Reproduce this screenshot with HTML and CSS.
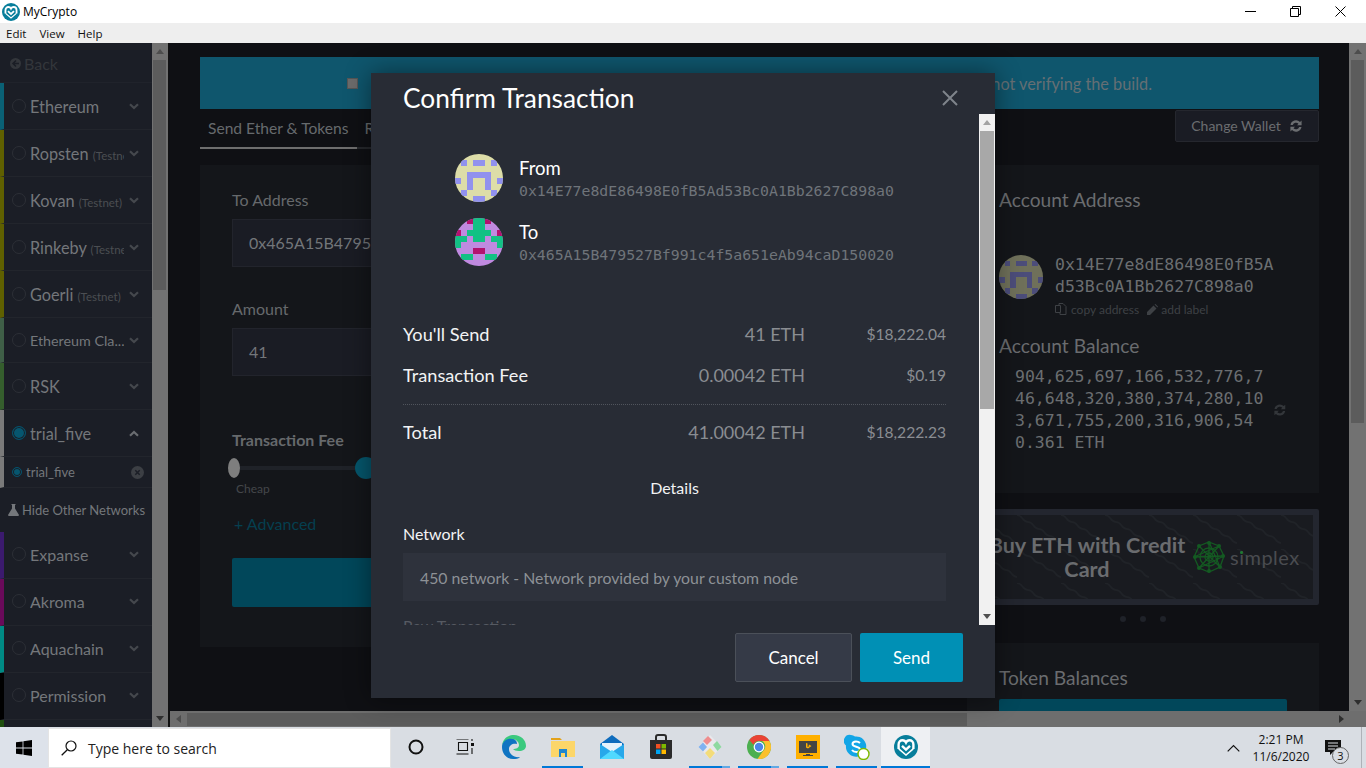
FILE: index.html
```html
<!DOCTYPE html>
<html lang="en">
<head>
    <meta charset="UTF-8">
    <meta name="viewport" content="width=device-width, initial-scale=1.0">
    <title>MyCrypto</title>
    <link rel="stylesheet" href="styles.css">
</head>
<body>
    <svg class="defs" width="0" height="0">
        <symbol id="blockie-from" viewBox="0 0 8 8" shape-rendering="crispEdges">
            <rect width="8" height="8" fill="#dddda8"/>
            <g fill="#9191ee">
                <rect x="1" y="1" width="1" height="1"/><rect x="3" y="1" width="2" height="1"/><rect x="6" y="1" width="1" height="1"/>
                <rect x="2" y="3" width="4" height="1"/>
                <rect x="0" y="4" width="1" height="1"/><rect x="2" y="4" width="1" height="2"/><rect x="5" y="4" width="1" height="2"/><rect x="7" y="4" width="1" height="1"/>
                <rect x="1" y="6" width="1" height="1"/><rect x="6" y="6" width="1" height="1"/>
                <rect x="3" y="7" width="2" height="1"/>
            </g>
        </symbol>
        <symbol id="blockie-to" viewBox="0 0 8 8" shape-rendering="crispEdges">
            <rect width="8" height="8" fill="#c08ae0"/>
            <g fill="#12c184">
                <rect x="3" y="0" width="2" height="2"/><rect x="2" y="2" width="4" height="1"/>
                <rect x="0" y="3" width="2" height="1"/><rect x="3" y="3" width="2" height="1"/><rect x="6" y="3" width="2" height="1"/>
                <rect x="0" y="4" width="1" height="1"/><rect x="7" y="4" width="1" height="1"/>
                <rect x="1" y="6" width="2" height="1"/><rect x="5" y="6" width="2" height="1"/>
            </g>
            <g fill="#b3126f">
                <rect x="0" y="2" width="1" height="1"/><rect x="7" y="2" width="1" height="1"/>
                <rect x="2" y="0" width="1" height="1"/><rect x="5" y="0" width="1" height="1"/>
                <rect x="3" y="5" width="2" height="1"/>
            </g>
        </symbol>
        <symbol id="chevron" viewBox="0 0 10 7">
            <path d="M1 1.2 5 5 9 1.2" fill="none" stroke="currentColor" stroke-width="2.2"/>
        </symbol>
        <symbol id="refresh" viewBox="0 0 14 14">
            <path d="M1.5 6A5.6 5.6 0 0 1 11 3l1.6-1.4V6.2H8L9.500 4.700A3.400 3.400 0 0 0 3.800 6ZM12.500 8A5.600 5.600 0 0 1 3 11l-1.600 1.400V7.800H6L4.500 9.300A3.400 3.400 0 0 0 10.200 8Z" fill="currentColor"/>
        </symbol>
        <symbol id="logo" viewBox="0 0 24 24">
            <circle cx="12" cy="12" r="12" fill="#077e9b"/>
            <path d="M4.600 14V9.500C4.600 6.800 6.500 5.300 8.500 5.300 10 5.300 11.300 6 12 7.500 12.700 6 14 5.300 15.500 5.300 17.500 5.300 19.400 6.800 19.400 9.500V14" fill="none" stroke="#fff" stroke-width="2.400"/>
            <path d="M4.800 13.800 12 20 19.200 13.800" fill="none" stroke="#fff" stroke-width="1.600"/>
            <path d="M8 10.800 12 14.600 16 10.800" fill="none" stroke="#fff" stroke-width="2.400"/>
        </symbol>
    </svg>

    <div class="titlebar">
        <svg class="title-logo" width="18" height="18"><use href="#logo"/></svg>
        <span class="title-text">MyCrypto</span>
        <div class="win-btns">
            <svg width="11" height="11" viewBox="0 0 11 11"><path d="M0 5.500H11" stroke="#000"/></svg>
            <svg width="11" height="11" viewBox="0 0 11 11"><path d="M.5 2.500h8v8h-8zM2.500 2.500v-2h8v8h-2" fill="none" stroke="#000"/></svg>
            <svg width="11" height="11" viewBox="0 0 11 11"><path d="M.5.500l10 10M10.500.500l-10 10" stroke="#000"/></svg>
        </div>
    </div>
    <div class="menubar">
        <span>Edit</span>
        <span>View</span>
        <span>Help</span>
    </div>

    <div class="app">
        <aside class="sidebar">
            <div class="back">
                <svg width="11" height="11" viewBox="0 0 11 11"><circle cx="5.500" cy="5.500" r="5.500" fill="#33363b"/><path d="M6 2.500 3 5.500 6 8.500M3.500 5.500H9" fill="none" stroke="#1b1e26" stroke-width="1.600"/></svg>
                <span>Back</span>
            </div>
            <div class="net net-eth"><i class="radio"></i><span class="net-name">Ethereum</span><svg class="chev" width="10" height="7"><use href="#chevron"/></svg></div>
            <div class="net net-test"><i class="radio"></i><span class="net-name">Ropsten <small>(Testnet)</small></span><svg class="chev" width="10" height="7"><use href="#chevron"/></svg></div>
            <div class="net net-test"><i class="radio"></i><span class="net-name">Kovan <small>(Testnet)</small></span><svg class="chev" width="10" height="7"><use href="#chevron"/></svg></div>
            <div class="net net-test"><i class="radio"></i><span class="net-name">Rinkeby <small>(Testnet)</small></span><svg class="chev" width="10" height="7"><use href="#chevron"/></svg></div>
            <div class="net net-test"><i class="radio"></i><span class="net-name">Goerli <small>(Testnet)</small></span><svg class="chev" width="10" height="7"><use href="#chevron"/></svg></div>
            <div class="net net-etc"><i class="radio"></i><span class="net-name">Ethereum Cla...</span><svg class="chev" width="10" height="7"><use href="#chevron"/></svg></div>
            <div class="net net-rsk"><i class="radio"></i><span class="net-name">RSK</span><svg class="chev" width="10" height="7"><use href="#chevron"/></svg></div>
            <div class="net net-custom"><i class="radio radio-on"></i><span class="net-name">trial_five</span><svg class="chev chev-up" width="10" height="7"><use href="#chevron"/></svg></div>
            <div class="subnet">
                <i class="radio radio-on radio-small"></i>
                <span class="subnet-name">trial_five</span>
                <svg class="subnet-x" width="13" height="13" viewBox="0 0 13 13"><circle cx="6.500" cy="6.500" r="6.500" fill="#3c3f44"/><path d="M4.300 4.300l4.400 4.400M8.700 4.300 4.300 8.700" stroke="#1b1e26" stroke-width="1.500"/></svg>
            </div>
            <div class="hide-other">
                <svg width="11" height="12" viewBox="0 0 11 12"><path d="M3.500 0h4v1H7v3.500l4 6.500-.6 1H.6L0 11l4-6.500V1h-.5z" fill="#74777b"/></svg>
                <span>Hide Other Networks</span>
            </div>
            <div class="net net-low net-exp"><i class="radio"></i><span class="net-name">Expanse</span><svg class="chev" width="10" height="7"><use href="#chevron"/></svg></div>
            <div class="net net-low net-akr"><i class="radio"></i><span class="net-name">Akroma</span><svg class="chev" width="10" height="7"><use href="#chevron"/></svg></div>
            <div class="net net-low net-aqua"><i class="radio"></i><span class="net-name">Aquachain</span><svg class="chev" width="10" height="7"><use href="#chevron"/></svg></div>
            <div class="net net-low net-perm"><i class="radio"></i><span class="net-name">Permission</span><svg class="chev" width="10" height="7"><use href="#chevron"/></svg></div>
            <div class="net net-last"></div>
        </aside>
        <div class="vscroll vscroll-side">
            <i class="arrow-up"></i>
            <div class="thumb thumb-side"></div>
            <i class="arrow-down"></i>
        </div>

        <div class="content">
            <div class="content-row">
                <main class="main">
                    <div class="banner">
                        <i class="banner-square"></i>
                        <span>not verifying the build.</span>
                    </div>
                    <div class="tab-row">
                        <nav class="tabs">
                            <a class="tab tab-on">Send Ether &amp; Tokens</a>
                            <a class="tab">R</a>
                        </nav>
                        <button class="change-wallet">Change Wallet <svg width="14" height="14"><use href="#refresh"/></svg></button>
                    </div>
                    <div class="columns">
                        <section class="card send-card">
                            <label class="field-label">To Address</label>
                            <div class="field-input">0x465A15B4795</div>
                            <label class="field-label field-gap">Amount</label>
                            <div class="field-input">41</div>
                            <div class="fee-label">Transaction Fee</div>
                            <div class="slider"><i class="slider-min"></i><i class="slider-track"></i><i class="slider-knob"></i></div>
                            <div class="cheap">Cheap</div>
                            <div class="advanced">+ Advanced</div>
                            <div class="send-btn"></div>
                        </section>
                        <div class="side-col">
                            <section class="card account-card">
                                <h3 class="card-title">Account Address</h3>
                                <div class="account-row">
                                    <svg class="blockie-small" width="44" height="44"><use href="#blockie-from"/></svg>
                                    <div class="account-text">
                                        <div class="mono-big">0x14E77e8dE86498E0fB5A<br>d53Bc0A1Bb2627C898a0</div>
                                        <div class="account-links">
                                            <svg width="13" height="13" viewBox="0 0 13 13"><path d="M.5 2.500h5v7h-5zM4 2.500V.500h4l3 3v8H5v-2" fill="none" stroke="currentColor"/></svg>
                                            <span>copy address</span>
                                            <svg width="11" height="11" viewBox="0 0 11 11"><path d="M0 11V8l6.500-6.500 3 3L3 11zM7.500.500 8.500 0l2.500 2.500-.5 1z" fill="currentColor"/></svg>
                                            <span>add label</span>
                                        </div>
                                    </div>
                                </div>
                                <h3 class="card-title balance-title">Account Balance</h3>
                                <div class="balance-row">
                                    <div class="mono-big">904,625,697,166,532,776,7<br>46,648,320,380,374,280,10<br>3,671,755,200,316,906,54<br>0.361 ETH</div>
                                    <svg class="balance-refresh" width="14" height="14"><use href="#refresh"/></svg>
                                </div>
                            </section>
                            <section class="promo">
                                <svg class="promo-waves" width="340" height="84">
                                    <defs>
                                        <pattern id="waves" width="44" height="34" patternUnits="userSpaceOnUse">
                                            <path d="M0 0c6 0 5 7 11 7s5 7 11 7 5 7 11 7 5 7 11 7" fill="none" stroke="#202328" stroke-width="1.300"/>
                                        </pattern>
                                    </defs>
                                    <rect width="340" height="84" fill="url(#waves)"/>
                                </svg>
                                <div class="promo-text">Buy ETH with Credit Card</div>
                                <svg class="simplex-icon" width="32" height="32" viewBox="0 0 32 32">
                                    <g fill="none" stroke="#145a22" stroke-width="1.300">
                                        <path d="M16 1 26 5 31 15 27 26 16 31 6 27 1 16 6 5Z"/>
                                        <path d="M16 1 27 26M26 5 6 27M31 15 1 16M27 26 6 5M16 31 16 1M6 27 31 15M1 16 26 5M6 5 27 26"/>
                                        <circle cx="16" cy="16" r="4"/><circle cx="16" cy="16" r="9"/>
                                    </g>
                                    <g fill="#145a22">
                                        <circle cx="16" cy="2" r="2"/><circle cx="26" cy="5" r="2"/><circle cx="30" cy="15" r="2"/><circle cx="27" cy="26" r="2"/>
                                        <circle cx="16" cy="30" r="2"/><circle cx="6" cy="27" r="2"/><circle cx="2" cy="16" r="2"/><circle cx="6" cy="5" r="2"/>
                                    </g>
                                </svg>
                                <span class="simplex-text">simplex</span>
                            </section>
                            <div class="dots"><i></i><i></i><i></i></div>
                            <section class="card token-card">
                                <h3 class="card-title">Token Balances</h3>
                                <div class="token-btn"></div>
                            </section>
                        </div>
                    </div>
                </main>
                <div class="vscroll vscroll-main">
                    <i class="arrow-up"></i>
                    <div class="thumb thumb-main"></div>
                    <i class="arrow-down"></i>
                </div>
            </div>
            <div class="hscroll">
                <i class="arrow-left"></i>
                <div class="hthumb"></div>
                <i class="arrow-right"></i>
            </div>
        </div>
    </div>

    <div class="taskbar">
        <div class="start">
            <svg width="16" height="16" viewBox="0 0 16 16"><path d="M0 2.300 6.600 1.400V7.600H0ZM7.400 1.300 16 0V7.600H7.400ZM0 8.400H6.600V14.600L0 13.700ZM7.400 8.400H16V16L7.400 14.700Z" fill="#000"/></svg>
        </div>
        <div class="search">
            <svg width="16" height="16" viewBox="0 0 16 16"><circle cx="10" cy="6" r="5" fill="none" stroke="#111" stroke-width="1.200"/><path d="M6.300 9.700.700 15.300" stroke="#111" stroke-width="1.300"/></svg>
            <span>Type here to search</span>
        </div>
        <div class="task-icon"><svg width="16" height="16" viewBox="0 0 16 16"><circle cx="8" cy="8" r="6.500" fill="none" stroke="#111" stroke-width="2"/></svg></div>
        <div class="task-icon"><svg width="18" height="16" viewBox="0 0 18 16"><path d="M.500 0h12M2.500 3.500h9v8h-9zM.500 15h12" fill="none" stroke="#111" stroke-width="1.100"/><path d="M15 4h3v3h-3z" fill="#111"/><path d="M16 9v6M16 0v2" stroke="#111" stroke-width="1.100"/></svg></div>
        <div class="task-icon"><svg width="26" height="26" viewBox="0 0 26 26">
            <path d="M1 13C1 5 7 1 13 1c7 0 12 5 12 11 0 3-3 5-7 5-3 0-5-1-6-2 3 0 6-1 6-4 0-3-3-6-7-6-6 0-10 4-10 8Z" fill="#3bc97e"/>
            <path d="M1 13c0-5 5-9 10-8 3 0 5 2 5 5-4-1-8 1-8 5 0 5 5 9 11 8-2 2-4 2-7 2C6 25 1 20 1 13Z" fill="#0f74c2"/>
        </svg></div>
        <div class="task-icon task-open"><svg width="24" height="20" viewBox="0 0 24 20"><path d="M0 1h9l2 2h-11z" fill="#e3a21a"/><path d="M0 4h24v16H0z" fill="#fcd669"/><path d="M8 12h8v8h-2v-4h-4v4H8z" fill="#1f87d0"/></svg></div>
        <div class="task-icon"><svg width="24" height="24" viewBox="0 0 24 24"><path d="M0 9 12 0l12 9v15H0z" fill="#0f6cbd"/><path d="M2 8h20v8H2z" fill="#e6f2fb"/><path d="M0 9l12 8 12-8v15H0z" fill="#28a8ea"/><path d="M0 24 12 15l12 9z" fill="#50d9ff"/></svg></div>
        <div class="task-icon"><svg width="24" height="25" viewBox="0 0 24 25"><path d="M7 6V3q0-2 2-2h6q2 0 2 2v3" fill="none" stroke="#2b2b2b" stroke-width="2"/><path d="M1 6h22v17q0 2-2 2H3q-2 0-2-2z" fill="#2b2b2b"/><path d="M7 10h4.500v4.500H7z" fill="#f25022"/><path d="M12.500 10H17v4.500h-4.500z" fill="#7fba00"/><path d="M7 15.500h4.500V20H7z" fill="#00a4ef"/><path d="M12.500 15.500H17V20h-4.500z" fill="#ffb900"/></svg></div>
        <div class="task-icon task-open task-multi"><svg width="24" height="26" viewBox="0 0 24 26"><path d="M12 1 23.500 13 12 25 .500 13z" fill="#e8e8ec"/><path d="M5 7l5-5 4 4-5 5z" fill="#ef8d8d"/><path d="M.500 13 5 8.500l4 4.500-4 4.500z" fill="#7fb2f0"/><path d="M7 19l5-5 5 5-5 6z" fill="#f3dc7a"/><path d="M15 11l4-4 4.500 6-4 4z" fill="#8ed9a0"/></svg></div>
        <div class="task-icon task-open task-multi"><svg width="24" height="24" viewBox="0 0 24 24"><circle cx="12" cy="12" r="12" fill="#4caf50"/><path d="M12 0a12 12 0 0 1 10.400 6H12a6 6 0 0 0-5.600 3.800L2.300 5A12 12 0 0 1 12 0Z" fill="#ea4335"/><path d="M22.400 6A12 12 0 0 1 10.500 23.900L16 16a6 6 0 0 0-1-10Z" fill="#fbc02d"/><circle cx="12" cy="12" r="5.400" fill="#fff"/><circle cx="12" cy="12" r="4.200" fill="#4a86e8"/></svg></div>
        <div class="task-icon task-open"><svg width="24" height="24" viewBox="0 0 24 24"><path d="M0 0h24v24H0z" fill="#ffb000"/><path d="M3 6h18v12H3z" fill="#444"/><path d="M10 19h4v1h3v1H7v-1h3z" fill="#444"/><path d="M10 8l1.500.500v3.500l2-1-1-.500.500-1 2.500 1.500-3.500 2.500-2-1z" fill="#ffb000"/></svg></div>
        <div class="task-icon task-open"><svg width="26" height="26" viewBox="0 0 26 26"><path d="M7 1a6 6 0 0 1 4 1.500 10 10 0 0 1 11 12 6 6 0 0 1-8 8 10 10 0 0 1-12-11A6 6 0 0 1 7 1Z" fill="#12a5e6"/><path d="M16 9c-1-1-2-1.500-4-1.500-2 0-3.500 1-3.500 2.500 0 3.500 7.500 2 7.500 5.500 0 1.500-1.500 2.500-3.500 2.500S9 17.500 8 16" fill="none" stroke="#fff" stroke-width="2"/><circle cx="19.500" cy="20" r="5.500" fill="#fff" stroke="#7fba00" stroke-width="1.400"/></svg></div>
        <div class="task-icon task-open task-active"><svg width="24" height="24"><use href="#logo"/></svg></div>

        <div class="tray">
            <svg class="tray-chev" width="13" height="8" viewBox="0 0 13 8"><path d="M.7 7.300 6.500 1.500 12.300 7.300" fill="none" stroke="#111" stroke-width="1.200"/></svg>
            <div class="clock"><div>2:21 PM</div><div>11/6/2020</div></div>
            <div class="notif">
                <svg width="16" height="16" viewBox="0 0 16 16"><path d="M0 0h16v12H8l-3 3v-3H0z" fill="#111"/><path d="M3 3h10M3 6h10M3 9h7" stroke="#dadde2"/></svg>
                <span class="notif-count">3</span>
            </div>
            <i class="show-desktop"></i>
        </div>
    </div>

    <div class="modal">
        <div class="modal-head">
            <h2>Confirm Transaction</h2>
            <svg width="16" height="16" viewBox="0 0 16 16"><path d="M1 1l14 14M15 1 1 15" stroke="#7f848b" stroke-width="2"/></svg>
        </div>
        <div class="modal-mid">
            <div class="modal-body">
                <div class="party">
                    <svg class="blockie" width="48" height="48"><use href="#blockie-from"/></svg>
                    <div>
                        <div class="party-label">From</div>
                        <div class="party-addr">0x14E77e8dE86498E0fB5Ad53Bc0A1Bb2627C898a0</div>
                    </div>
                </div>
                <div class="party">
                    <svg class="blockie" width="48" height="48"><use href="#blockie-to"/></svg>
                    <div>
                        <div class="party-label">To</div>
                        <div class="party-addr">0x465A15B479527Bf991c4f5a651eAb94caD150020</div>
                    </div>
                </div>
                <div class="amounts">
                    <div class="amount-row"><span class="amount-name">You'll Send</span><span class="amount-eth">41 ETH</span><span class="amount-usd">$18,222.04</span></div>
                    <div class="amount-row"><span class="amount-name">Transaction Fee</span><span class="amount-eth">0.00042 ETH</span><span class="amount-usd">$0.19</span></div>
                    <div class="amount-row amount-total"><span class="amount-name">Total</span><span class="amount-eth">41.00042 ETH</span><span class="amount-usd">$18,222.23</span></div>
                </div>
                <div class="details">Details</div>
                <div class="detail-label">Network</div>
                <div class="detail-box">450 network - Network provided by your custom node</div>
                <div class="detail-label detail-next">Raw Transaction</div>
            </div>
            <div class="modal-scroll">
                <i class="arrow-up"></i>
                <div class="modal-thumb"></div>
                <i class="arrow-down"></i>
            </div>
        </div>
        <div class="modal-foot">
            <button class="btn-cancel">Cancel</button>
            <button class="btn-send">Send</button>
        </div>
    </div>
</body>
</html>
```

FILE: styles.css
```css
* {
    box-sizing: border-box;
}
body {
    margin: 0;
    width: 1366px;
    height: 768px;
    overflow: hidden;
    position: relative;
    display: flex;
    flex-direction: column;
    font-family: Lato, "Open Sans", sans-serif;
    background: #0f1014;
}
h2, h3 {
    margin: 0;
    font-weight: 400;
}
i {
    display: block;
}
button {
    font-family: inherit;
}
.defs {
    position: absolute;
}

/* window chrome */
.titlebar {
    height: 23px;
    background: #fff;
    display: flex;
    align-items: center;
    padding-left: 2px;
    font-family: "Open Sans", sans-serif;
    font-size: 12px;
    color: #000;
}
.title-text {
    margin-left: 3px;
}
.win-btns {
    margin-left: auto;
    display: flex;
    gap: 34px;
    padding-right: 20px;
}
.menubar {
    height: 20px;
    background: #eee;
    display: flex;
    gap: 13px;
    padding-left: 6px;
    align-items: center;
    font-family: "Open Sans", sans-serif;
    font-size: 11.5px;
    color: #111;
}
.app {
    height: 684px;
    display: flex;
}

/* sidebar */
.sidebar {
    width: 152px;
    background: #1b1e26;
    overflow: hidden;
    flex-shrink: 0;
}
.back {
    height: 40px;
    display: flex;
    align-items: center;
    gap: 3px;
    padding: 1px 0 0 10px;
    color: #33363b;
    font-size: 16px;
    border-bottom: 1px solid #20232b;
}
.net {
    height: 47px;
    display: flex;
    align-items: center;
    padding-left: 8px;
    border-left: 4px solid #5f6000;
    border-bottom: 1px solid #22252c;
    color: #74777b;
    font-size: 16.3px;
}
.net-name {
    margin-left: 4px;
    width: 94px;
    white-space: nowrap;
    overflow: hidden;
}
.net-name small {
    font-size: 11.5px;
    color: #4b4e52;
}
.net-eth { border-left-color: #0a6175; }
.net-etc { border-left-color: #3f5f47; height: 45px; }
.net-etc .net-name { font-size: 14.3px; }
.net-rsk { border-left-color: #355e2d; }
.net-custom { border-left-color: #7a7a7a; }
.net-low { padding-bottom: 2px; font-size: 16px; }
.net-exp { border-left-color: #3b1a6e; }
.net-akr { border-left-color: #6a0a5a; }
.net-aqua { border-left-color: #008a84; }
.net-perm { border-left-color: #000; }
.net-last { border-left-color: #1f4f0f; }
.radio {
    width: 14px;
    height: 14px;
    border-radius: 50%;
    border: 1px solid #2c2f36;
    flex-shrink: 0;
}
.radio-on {
    border-color: #06506a;
    background: #06566f;
    box-shadow: inset 0 0 0 1px #1b1e26;
}
.radio-small {
    width: 10px;
    height: 10px;
}
.chev {
    margin-left: 5px;
    color: #45484d;
    flex-shrink: 0;
}
.chev-up {
    transform: rotate(180deg);
    color: #6a6d71;
}
.subnet {
    height: 31px;
    display: flex;
    align-items: center;
    padding-left: 8px;
    border-left: 4px solid #7a7a7a;
    border-bottom: 1px solid #22252c;
    color: #74777b;
    font-size: 13px;
}
.subnet-name {
    margin-left: 4px;
}
.subnet-x {
    margin-left: auto;
    margin-right: 8px;
}
.hide-other {
    height: 44px;
    display: flex;
    align-items: center;
    gap: 3px;
    padding-left: 8px;
    color: #74777b;
    font-size: 13px;
    white-space: nowrap;
}

/* scrollbars */
.vscroll {
    width: 17px;
    background: #727272;
    flex-shrink: 0;
    display: flex;
    flex-direction: column;
    align-items: center;
}
.vscroll-side {
    border-right: 1px solid #111;
}
.thumb {
    width: 13px;
    background: #5c5c5c;
}
.thumb-side {
    height: 230px;
    margin-top: 6px;
    margin-right: 1px;
}
.thumb-main {
    height: 363px;
    margin-top: 6px;
}
.arrow-up, .arrow-down {
    width: 0;
    height: 0;
    border-left: 4px solid transparent;
    border-right: 4px solid transparent;
}
.arrow-up {
    border-bottom: 5px solid #4d4d4d;
    margin-top: 6px;
}
.arrow-down {
    border-top: 5px solid #2e2e2e;
    margin-top: auto;
    margin-bottom: 6px;
}
.arrow-left, .arrow-right {
    width: 0;
    height: 0;
    border-top: 4px solid transparent;
    border-bottom: 4px solid transparent;
}
.arrow-left {
    border-right: 5px solid #4d4d4d;
    margin-left: 6px;
}
.arrow-right {
    border-left: 5px solid #2e2e2e;
    margin-left: auto;
    margin-right: 22px;
}
.hscroll {
    height: 16px;
    background: #6e6e6e;
    border-left: 1px solid #111;
    display: flex;
    align-items: center;
    flex-shrink: 0;
}
.hthumb {
    width: 780px;
    height: 13px;
    background: #5c5c5c;
    margin-left: 6px;
}

/* main page */
.content {
    flex: 1;
    min-width: 0;
    display: flex;
    flex-direction: column;
}
.content-row {
    height: 668px;
    display: flex;
}
.main {
    flex: 1;
    min-width: 0;
    overflow: hidden;
    padding: 14px 30px 0 31px;
    background: #0f1014;
}
.banner {
    height: 52px;
    background: #0f566d;
    display: flex;
    align-items: center;
    justify-content: space-between;
    padding: 0 167px 0 147px;
    color: #656f74;
    font-size: 16.3px;
}
.banner-square {
    width: 11px;
    height: 11px;
    background: #6b6b6b;
    border: 1px solid #555;
}
.tab-row {
    height: 40px;
    display: flex;
    justify-content: space-between;
    align-items: flex-start;
}
.tabs {
    display: flex;
}
.tab {
    height: 40px;
    line-height: 38px;
    padding: 0 8px;
    font-size: 15.6px;
    color: #666a6d;
    border-bottom: 2px solid #26282c;
    white-space: nowrap;
}
.tab-on {
    border-bottom-color: #6e6e6e;
}
.change-wallet {
    height: 32px;
    width: 144px;
    margin-top: 1px;
    padding-bottom: 2px;
    background: #1a1c24;
    border: 1px solid #25272e;
    border-radius: 2px;
    color: #6b6d70;
    font-size: 14px;
    display: flex;
    align-items: center;
    justify-content: center;
    gap: 8px;
}
.columns {
    display: flex;
    gap: 16px;
    margin-top: 16px;
    align-items: flex-start;
}
.card {
    background: #14161a;
    padding: 24px 32px;
}
.send-card {
    width: 751px;
    height: 482px;
    flex-shrink: 0;
    padding-top: 25px;
}
.field-label {
    display: block;
    height: 20px;
    line-height: 20px;
    margin-bottom: 9px;
    font-size: 16px;
    color: #66696c;
}
.field-gap {
    margin-top: 32px;
}
.field-input {
    height: 48px;
    line-height: 46px;
    padding-left: 16px;
    background: #1a1c24;
    border: 1px solid #22242c;
    font-size: 16px;
    color: #73767a;
    white-space: nowrap;
    overflow: hidden;
}
.fee-label {
    margin-top: 54px;
    font-size: 16px;
    font-weight: 700;
    color: #66696c;
}
.slider {
    display: flex;
    align-items: center;
    height: 22px;
    margin: 8px 0 0 -4px;
}
.slider-min {
    width: 12px;
    height: 20px;
    border-radius: 50%;
    background: #7e7e7e;
}
.slider-track {
    width: 115px;
    height: 4px;
    background: #1f2228;
}
.slider-knob {
    width: 22px;
    height: 22px;
    border-radius: 50%;
    background: #05566c;
}
.cheap {
    margin: 2px 0 0 4px;
    font-size: 12px;
    color: #44474a;
}
.advanced {
    margin-top: 18px;
    margin-left: 2px;
    font-size: 16px;
    color: #053f4f;
}
.send-btn {
    height: 49px;
    margin-top: 25px;
    background: #01475a;
    border-radius: 2px;
}
.side-col {
    width: 352px;
    flex-shrink: 0;
}
.account-card {
    height: 328px;
}
.card-title {
    font-size: 19.2px;
    line-height: 22px;
    color: #6a6c6f;
}
.account-row {
    display: flex;
    gap: 12px;
    margin-top: 44px;
}
.blockie-small {
    border-radius: 50%;
    opacity: .45;
    flex-shrink: 0;
}
.account-text {
    margin-top: -1px;
}
.mono-big {
    font-family: "DejaVu Sans Mono", monospace;
    font-size: 16.5px;
    line-height: 22px;
    color: #6b6e71;
    white-space: nowrap;
}
.account-links {
    display: flex;
    align-items: center;
    gap: 3px;
    margin-top: 4px;
    font-size: 12px;
    color: #3e4145;
}
.account-links span + svg {
    margin-left: 5px;
}
.balance-title {
    margin-top: 18px;
}
.balance-row {
    display: flex;
    align-items: center;
    gap: 10px;
    margin: 9px 0 0 16px;
}
.balance-refresh {
    color: #33363a;
}
.promo {
    height: 96px;
    margin-top: 16px;
    background: #191b20;
    border: 6px solid #23262f;
    border-radius: 2px;
    position: relative;
    display: flex;
    align-items: center;
}
.promo-waves {
    position: absolute;
    left: 0;
    top: 0;
}
.promo-text {
    width: 228px;
    position: relative;
    text-align: center;
    font-size: 21.6px;
    font-weight: 700;
    line-height: 24px;
    color: #6a6c6f;
}
.simplex-icon {
    position: relative;
    margin-left: -8px;
}
.simplex-text {
    position: relative;
    margin-left: 5px;
    font-size: 20px;
    letter-spacing: .5px;
    color: #4a4c50;
}
.simplex-text::before {
    content: "";
    position: absolute;
    left: 10px;
    top: 6px;
    width: 3px;
    height: 3px;
    border-radius: 50%;
    background: #1c7a30;
}
.dots {
    height: 28px;
    margin-bottom: 10px;
    display: flex;
    justify-content: center;
    align-items: center;
    gap: 14px;
}
.dots i {
    width: 6px;
    height: 6px;
    border-radius: 50%;
    background: #1f2229;
}
.token-card {
    height: 160px;
}
.token-btn {
    width: 288px;
    height: 40px;
    margin-top: 10px;
    background: #01475a;
    border-radius: 2px;
}

/* taskbar */
.taskbar {
    height: 41px;
    background: #d9dde3;
    display: flex;
    align-items: stretch;
    font-family: "Open Sans", sans-serif;
    color: #111;
}
.start {
    width: 48px;
    display: flex;
    align-items: center;
    justify-content: center;
    background: #dde2ea;
}
.search {
    width: 343px;
    margin-top: 1px;
    background: #fff;
    border: 1px solid #e4e4e4;
    display: flex;
    align-items: center;
    gap: 11px;
    padding-left: 12px;
    font-size: 14px;
    color: #222;
}
.task-icon {
    width: 49px;
    display: flex;
    align-items: center;
    justify-content: center;
    position: relative;
    padding-bottom: 2px;
}
.task-open::after {
    content: "";
    position: absolute;
    left: 4px;
    right: 4px;
    bottom: 0;
    height: 2px;
    background: #0078d7;
}
.task-multi::before {
    content: "";
    position: absolute;
    right: 4px;
    bottom: 0;
    width: 8px;
    height: 2px;
    background: #62a9e4;
    z-index: 1;
}
.task-active {
    background: #eef0f3;
}
.task-active::after {
    left: 0;
    right: 0;
}
.tray {
    margin-left: auto;
    display: flex;
    align-items: center;
}
.tray-chev {
    margin-right: 7px;
}
.clock {
    width: 68px;
    text-align: center;
    font-size: 12px;
    line-height: 17px;
}
.notif {
    width: 46px;
    padding-left: 10px;
    position: relative;
    height: 100%;
    display: flex;
    align-items: center;
}
.notif-count {
    position: absolute;
    left: 17px;
    top: 20px;
    width: 17px;
    height: 17px;
    border-radius: 50%;
    border: 1px solid #666;
    background: #d9dde3;
    font-size: 11px;
    line-height: 15px;
    text-align: center;
}
.show-desktop {
    width: 1px;
    height: 100%;
    margin-right: 4px;
    background: #aeb2b8;
}

/* confirm modal */
.modal {
    position: absolute;
    left: 371px;
    top: 73px;
    width: 624px;
    height: 625px;
    background: #282c35;
    box-shadow: 0 0 24px rgba(0, 0, 0, .45);
    display: flex;
    flex-direction: column;
    color: #fff;
}
.modal-head {
    height: 41px;
    flex-shrink: 0;
    padding: 7px 37px 0 32px;
    display: flex;
    justify-content: space-between;
}
.modal-head h2 {
    font-size: 26.3px;
    line-height: 36px;
}
.modal-head svg {
    margin-top: 10px;
}
.modal-mid {
    height: 511px;
    flex-shrink: 0;
    display: flex;
}
.modal-body {
    width: 608px;
    padding: 40px 33px 0 32px;
    overflow: hidden;
}
.party {
    display: flex;
    gap: 16px;
    margin: 0 0 16px 52px;
}
.blockie {
    border-radius: 50%;
    flex-shrink: 0;
}
.party-label {
    font-size: 18.5px;
    line-height: 28px;
}
.party-addr {
    font-family: "DejaVu Sans Mono", monospace;
    font-size: 14.83px;
    line-height: 18px;
    color: #6f747a;
    white-space: nowrap;
}
.amounts {
    margin-top: 47px;
}
.amount-row {
    height: 41px;
    display: flex;
    align-items: center;
}
.amount-name {
    flex: 1;
    font-size: 18.2px;
    color: #f2f3f4;
}
.amount-eth {
    font-size: 18px;
    color: #8a8d92;
}
.amount-usd {
    width: 141px;
    text-align: right;
    font-size: 15.6px;
    color: #8a8d92;
}
.amount-total {
    margin-top: 9px;
    padding-top: 6px;
    border-top: 1px dotted #50545c;
    height: 49px;
}
.details {
    margin-top: 15px;
    text-align: center;
    font-size: 16px;
    line-height: 40px;
    color: #f2f3f4;
}
.detail-label {
    margin-top: 16px;
    font-size: 16px;
    line-height: 20px;
    color: #f2f3f4;
}
.detail-box {
    height: 48px;
    line-height: 49px;
    margin-top: 9px;
    padding-left: 17px;
    background: #2e323c;
    font-size: 15.8px;
    color: #8d9196;
}
.detail-label.detail-next {
    margin-top: 15px;
    color: #565a62;
}
.modal-scroll {
    width: 16px;
    background: #f1f1f1;
    display: flex;
    flex-direction: column;
    align-items: center;
}
.modal-scroll .arrow-up {
    border-bottom-color: #a3a3a3;
}
.modal-scroll .arrow-down {
    border-top-color: #505050;
}
.modal-thumb {
    width: 14px;
    height: 278px;
    margin-top: 6px;
    background: #a8a8a8;
}
.modal-foot {
    display: flex;
    justify-content: flex-end;
    gap: 8px;
    padding: 8px 32px 0 0;
}
.btn-cancel, .btn-send {
    height: 49px;
    border-radius: 2px;
    color: #fff;
    font-size: 17px;
}
.btn-cancel {
    width: 117px;
    background: #353a47;
    border: 1px solid #4b5059;
}
.btn-send {
    width: 103px;
    background: #0090b5;
    border: 0;
}
```
